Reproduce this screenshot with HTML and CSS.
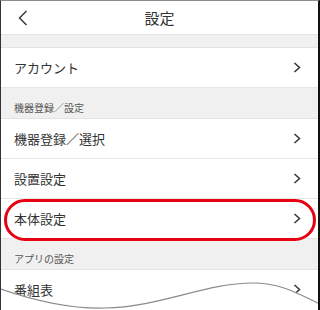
FILE: index.html
```html
<!DOCTYPE html>
<html lang="ja">
<head>
<meta charset="utf-8">
<link rel="stylesheet" href="styles.css">
</head>
<body>
<div class="frame">
  <header class="header">
    <svg class="back" width="10" height="16" viewBox="0 0 10 16"><path d="M8.5 1 L1.5 8 L8.5 15" fill="none" stroke="#333" stroke-width="1.4"/></svg>
    <h1 class="title">設定</h1>
  </header>
  <div class="spacer"></div>
  <div class="row"><span>アカウント</span><svg class="chev" width="8" height="11" viewBox="0 0 8 11"><path d="M1.5 1 L6.5 5.5 L1.5 10" fill="none" stroke="#333" stroke-width="1.5"/></svg></div>
  <div class="section">機器登録／設定</div>
  <div class="row"><span>機器登録／選択</span><svg class="chev" width="8" height="11" viewBox="0 0 8 11"><path d="M1.5 1 L6.5 5.5 L1.5 10" fill="none" stroke="#333" stroke-width="1.5"/></svg></div>
  <div class="row"><span>設置設定</span><svg class="chev" width="8" height="11" viewBox="0 0 8 11"><path d="M1.5 1 L6.5 5.5 L1.5 10" fill="none" stroke="#333" stroke-width="1.5"/></svg></div>
  <div class="row"><span>本体設定</span><svg class="chev" width="8" height="11" viewBox="0 0 8 11"><path d="M1.5 1 L6.5 5.5 L1.5 10" fill="none" stroke="#333" stroke-width="1.5"/></svg></div>
  <div class="section">アプリの設定</div>
  <div class="row"><span>番組表</span><svg class="chev" width="8" height="11" viewBox="0 0 8 11"><path d="M1.5 1 L6.5 5.5 L1.5 10" fill="none" stroke="#333" stroke-width="1.5"/></svg></div>
  <div class="highlight"></div>
  <svg class="tear" width="322" height="40" viewBox="0 270 322 40">
    <path d="M-2 287 C 35 300 70 308 105 307 C 160 306 205 282 253 282 C 282 282 300 294 322 304 L322 312 L-2 312 Z" fill="#fff"/>
    <path d="M-2 287 C 35 300 70 308 105 307 C 160 306 205 282 253 282 C 282 282 300 294 322 304" fill="none" stroke="#8a8a8a" stroke-width="1.2"/>
  </svg>
</div>
</body>
</html>
```

FILE: styles.css
```css
html, body {
  margin: 0;
  padding: 0;
  background: #fff;
}
body {
  font-family: "Noto Sans CJK JP", "Noto Sans", sans-serif;
  color: #333;
}
.frame {
  position: relative;
  width: 320px;
  height: 310px;
  box-sizing: border-box;
  border-top: 1px solid #8c8c8c;
  border-left: 1px solid #333;
  border-right: 2px solid #111;
  overflow: hidden;
  background: #fff;
}
.header {
  position: relative;
  height: 33px;
  display: flex;
  align-items: center;
  justify-content: center;
  border-bottom: 1px solid #e3e3e3;
}
.back {
  position: absolute;
  left: 17px;
  top: 9px;
}
.title {
  margin: 0;
  font-size: 15px;
  font-weight: normal;
  color: #333;
  line-height: 1;
}
.spacer {
  height: 12px;
  background: #f0f0f0;
  border-bottom: 1px solid #e3e3e3;
}
.row {
  height: 39px;
  display: flex;
  align-items: center;
  justify-content: space-between;
  padding: 0 17px 0 13px;
  font-size: 13px;
  border-bottom: 1px solid #e6e6e6;
  background: #fff;
}
.section {
  height: 31px;
  box-sizing: border-box;
  display: flex;
  align-items: flex-end;
  padding: 0 13px 3px;
  font-size: 10px;
  color: #555;
  background: #f0f0f0;
  border-bottom: 1px solid #e3e3e3;
}
.highlight {
  position: absolute;
  left: 3px;
  top: 198px;
  width: 312px;
  height: 42px;
  box-sizing: border-box;
  border: 3px solid #e60012;
  border-radius: 21px;
}
.tear {
  position: absolute;
  left: -1px;
  bottom: -1px;
  display: block;
}
```
